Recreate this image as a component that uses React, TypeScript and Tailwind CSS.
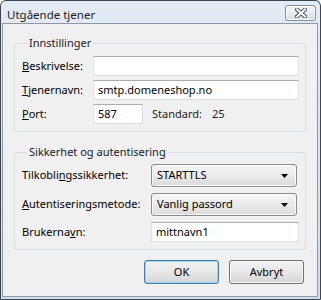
import React from 'react';

const font = { fontFamily: '"Noto Sans", "Liberation Sans", sans-serif' };

const TextBox = ({ value, className }: { value?: string; className: string }) => (
  <div
    className={`h-[20px] flex items-center pl-[4px] bg-white border border-[#dbdfe6] border-t-[#abadb3] text-[11px] text-black ${className}`}
  >
    {value}
  </div>
);

const Combo = ({ value }: { value: string }) => (
  <div className="h-[23px] w-[146px] flex items-center justify-between pl-[5px] pr-[8px] rounded-[3px] border border-[#8c8c8c] bg-gradient-to-b from-[#f5f5f5] via-[#ebebeb] to-[#dadada] shadow-[inset_0_0_0_1px_#fbfbfb] text-[11px] text-black">
    <span>{value}</span>
    <svg width="7" height="4" viewBox="0 0 7 4">
      <path d="M0 0h7L3.5 4z" fill="#000" />
    </svg>
  </div>
);

const Button = ({ label, primary }: { label: string; primary?: boolean }) => (
  <div
    className={`w-[75px] h-[24px] flex items-center justify-center rounded-[3px] border text-[11px] text-black bg-gradient-to-b from-[#f2f2f2] via-[#e8e8e8] to-[#d4d4d4] ${
      primary
        ? 'border-[#3c7fb1] shadow-[inset_0_0_0_1px_#9ad8f6]'
        : 'border-[#707070] shadow-[inset_0_0_0_1px_#fafafa]'
    }`}
  >
    {label}
  </div>
);

const Row = ({ children }: { children: React.ReactNode }) => (
  <div className="flex items-center">{children}</div>
);

export default function App() {
  return (
    <div style={font} className="w-[321px] h-[300px] flex flex-col rounded-t-[6px] border border-[#3d4550] bg-gradient-to-b from-[#e3ebf5] to-[#d2deeb]">
      {/* title bar */}
      <div className="h-[22px] flex items-start justify-between pl-[6px] pr-[4px]">
        <span className="mt-[6px] text-[11.5px] leading-[15px] text-[#1e1e1e]">Utgående tjener</span>
        <div className="mt-[4px] w-[31px] h-[16px] flex items-center justify-center rounded-[3px] border border-[#7f8fa6] bg-gradient-to-b from-[#f3f6fa] to-[#d5dfeb] shadow-[inset_0_0_0_1px_#ffffff]">
          <svg width="12" height="10" viewBox="0 0 12 10">
            <path d="M2 1.5l8 7M10 1.5l-8 7" stroke="#4a5463" strokeWidth="4" strokeLinecap="square" />
            <path d="M2 1.5l8 7M10 1.5l-8 7" stroke="#ffffff" strokeWidth="2" strokeLinecap="square" />
          </svg>
        </div>
      </div>

      {/* client area */}
      <div className="flex-1 ml-[1px] mr-[2px] mb-[2px] border border-[#8d99a9] bg-[#f0f0f0] px-[11px] pt-[12px] flex flex-col text-[11px] text-black">
        <fieldset className="border border-[#d5dfe5] rounded-[3px] pl-[7px] pr-[6px] pt-[6px] pb-[7px]">
          <legend className="ml-[5px] px-[2px] leading-[14px] text-[#151c2a]">Innstillinger</legend>
          <div className="flex flex-col gap-[4px]">
            <Row>
              <span className="w-[71px]">
                <span className="underline">B</span>eskrivelse:
              </span>
              <TextBox className="flex-1" />
            </Row>
            <Row>
              <span className="w-[71px]">
                <span className="underline">T</span>jenernavn:
              </span>
              <TextBox className="flex-1" value="smtp.domeneshop.no" />
            </Row>
            <Row>
              <span className="w-[71px]">
                <span className="underline">P</span>ort:
              </span>
              <TextBox className="w-[50px]" value="587" />
              <span className="ml-[9px] text-[#1e1e1e]">Standard:</span>
              <span className="ml-[10px] text-[#1e1e1e]">25</span>
            </Row>
          </div>
        </fieldset>

        <fieldset className="mt-[13px] border border-[#d5dfe5] rounded-[3px] pl-[7px] pr-[6px] pt-[5px] pb-[7px]">
          <legend className="ml-[5px] px-[2px] leading-[14px] text-[#151c2a]">Sikkerhet og autentisering</legend>
          <div className="flex flex-col gap-[6px]">
            <Row>
              <span className="w-[129px]">
                Tilkobli<span className="underline">n</span>gssikkerhet:
              </span>
              <Combo value="STARTTLS" />
            </Row>
            <Row>
              <span className="w-[129px]">
                <span className="underline">A</span>utentiseringsmetode:
              </span>
              <Combo value="Vanlig passord" />
            </Row>
            <Row>
              <span className="w-[129px]">
                Brukerna<span className="underline">v</span>n:
              </span>
              <TextBox className="flex-1" value="mittnavn1" />
            </Row>
          </div>
        </fieldset>

        <div className="mt-[10px] mr-[2px] flex justify-end gap-[10px]">
          <Button label="OK" primary />
          <Button label="Avbryt" />
        </div>
      </div>
    </div>
  );
}
